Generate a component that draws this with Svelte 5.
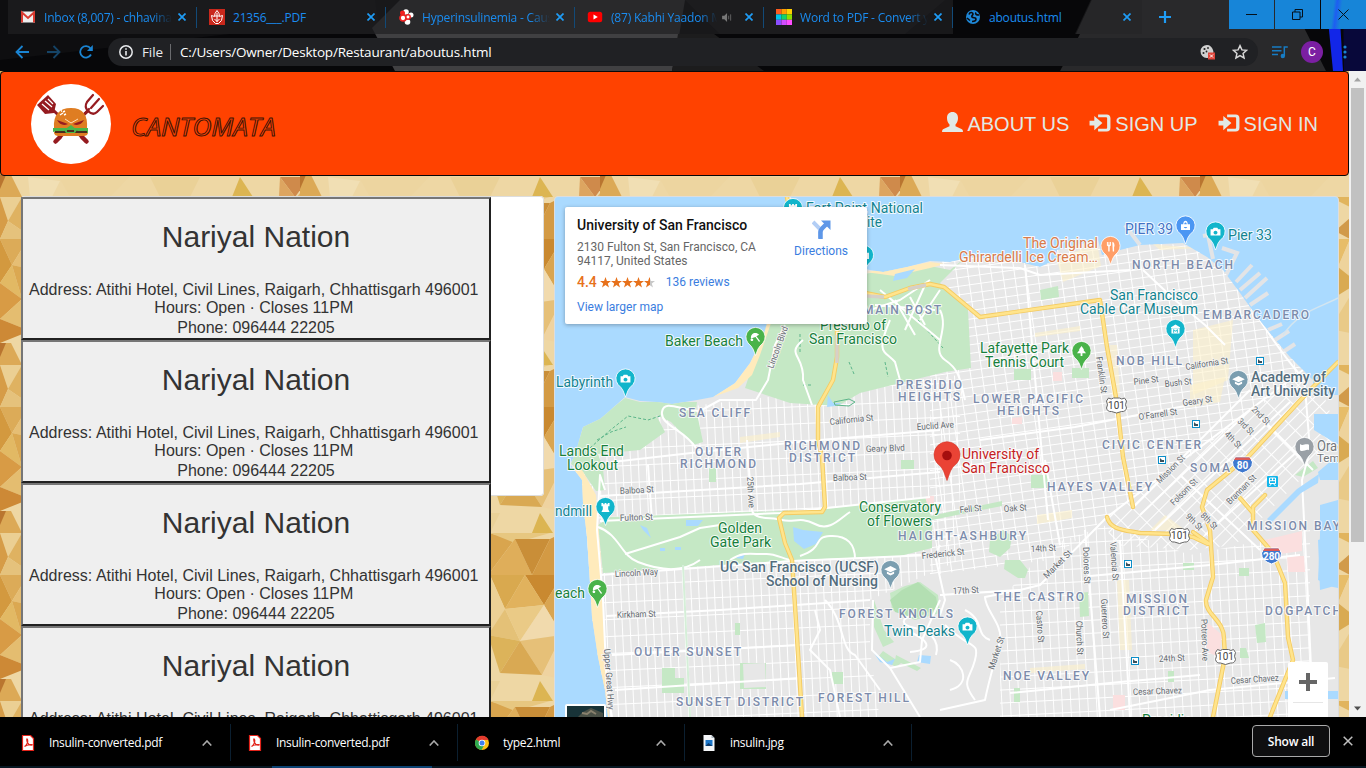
<script>
  const tabs = [
    { title: 'Inbox (8,007) - chhavina', icon: 'gmail', fade: true },
    { title: '21356___.PDF', icon: 'pdf' },
    { title: 'Hyperinsulinemia - Caus', icon: 'cells', fade: true },
    { title: '(87) Kabhi Yaadon Mein', icon: 'youtube', fade: true, audio: true },
    { title: 'Word to PDF - Convert y', icon: 'grid', fade: true },
    { title: 'aboutus.html', icon: 'globe', active: true }
  ];
  const downloads = [
    { name: 'Insulin-converted.pdf', icon: 'acro' },
    { name: 'Insulin-converted.pdf', icon: 'acro' },
    { name: 'type2.html', icon: 'chrome' },
    { name: 'insulin.jpg', icon: 'image' }
  ];
  const cards = [1, 2, 3, 4];
  const swatches = ['#ff5a1f', '#ff9d00', '#ffd000', '#00c4e8', '#13d36b', '#8ce000', '#8a4dff', '#d24dff', '#ff4dff'];

  // Map coordinates: [text, x, baseline, width]
  const areas = [
    ['SEA CLIFF', 679, 417, 71], ['OUTER', 695, 456, 46], ['RICHMOND', 680, 468, 76],
    ['RICHMOND', 784, 450, 76], ['DISTRICT', 789, 462, 66], ['PRESIDIO', 896, 389, 66],
    ['HEIGHTS', 898, 401, 62], ['LOWER PACIFIC', 973, 403, 110], ['HEIGHTS', 997, 415, 62],
    ['MAIN POST', 863, 314, 78], ['NORTH BEACH', 1132, 269, 101], ['EMBARCADERO', 1203, 319, 106],
    ['NOB HILL', 1116, 365, 66], ['CIVIC CENTER', 1102, 449, 99], ['SOMA', 1190, 472, 40],
    ['HAYES VALLEY', 1047, 491, 105], ['HAIGHT-ASHBURY', 898, 540, 128], ['MISSION BAY', 1247, 530, 93],
    ['THE CASTRO', 994, 601, 90], ['MISSION', 1126, 603, 61], ['DISTRICT', 1123, 615, 66],
    ['DOGPATCH', 1265, 615, 76], ['FOREST KNOLLS', 839, 618, 114], ['NOE VALLEY', 1003, 680, 86],
    ['OUTER SUNSET', 634, 656, 107], ['SUNSET DISTRICT', 676, 706, 127], ['FOREST HILL', 818, 702, 91]
  ];
  const places = [
    ['Baker Beach', 665, 346, 78, 'green'], ['Presidio of', 820, 330, 66, 'green'], ['San Francisco', 809, 344, 88, 'green'],
    ['Lands End', 559, 456, 65, 'green'], ['Lookout', 567, 470, 51, 'green'], ['Golden', 718, 533, 44, 'green'],
    ['Gate Park', 710, 547, 61, 'green'], ['Conservatory', 859, 512, 82, 'green'], ['of Flowers', 867, 526, 65, 'green'],
    ['Lafayette Park', 980, 353, 89, 'green'], ['Tennis Court', 985, 367, 79, 'green'], ['each', 555, 598, 30, 'green'],
    ['Presidio', 1142, 725, 50, 'green'],
    ['Labyrinth', 556, 387, 57, 'teal'], ['ndmill', 555, 516, 37, 'teal'], ['Fort Point National', 806, 213, 117, 'teal'],
    ['Site', 859, 227, 23, 'teal'], ['San Francisco', 1110, 300, 88, 'teal'], ['Cable Car Museum', 1080, 314, 118, 'teal'],
    ['Twin Peaks', 884, 636, 71, 'teal'], ['Pier 33', 1228, 240, 44, 'teal'], ['PIER 39', 1125, 234, 48, 'blue'],
    ['The Original', 1023, 248, 75, 'orange'], ['Ghirardelli Ice Cream…', 959, 262, 139, 'orange'],
    ['University of', 962, 459, 77, 'red'], ['San Francisco', 962, 473, 88, 'red'],
    ['Academy of', 1251, 382, 75, 'slate'], ['Art University', 1251, 396, 84, 'slate'],
    ['UC San Francisco (UCSF)', 720, 572, 159, 'slate'], ['School of Nursing', 766, 586, 112, 'slate'],
    ['Oracle', 1317, 451, 37, 'grey'], ['Temple', 1317, 462, 38, 'greysmall']
  ];
  // [text, x, baseline, width, rotation]
  const streets = [
    ['California St', 830, 425, 44, -6], ['Geary Blvd', 866, 452, 39, -2], ['Euclid Ave', 917, 430, 37, -4],
    ['Balboa St', 620, 494, 34, -3], ['Balboa St', 833, 481, 34, -2], ['Fulton St', 620, 521, 33, -2],
    ['Lincoln Way', 615, 577, 43, -3], ['Kirkham St', 617, 618, 39, -2], ['Frederick St', 922, 559, 43, -6],
    ['Fell St', 960, 513, 22, -6], ['Oak St', 1004, 512, 23, -4], ['14th St', 1031, 552, 25, -3], ['17th St', 953, 594, 26, -3],
    ['24th St', 1159, 662, 26, -3], ['Cesar Chavez', 1133, 695, 49, -2], ['Cesar Chavez', 1231, 684, 48, -4],
    ['Pine St', 1134, 385, 25, -7], ['Bush St', 1165, 387, 27, -6], ['California St', 1186, 370, 43, -9],
    ['Geary St', 1183, 406, 30, -8], ["O'Farrell St", 1139, 420, 39, -8],
    ['2nd St', 1251, 410, 22, 45], ['3rd St', 1237, 422, 19, 45], ['4th St', 1224, 435, 20, 45],
    ['9th St', 1185, 517, 20, 45], ['8th St', 1200, 516, 20, 45],
    ['Mission St', 1160, 484, 36, -45], ['Folsom St', 1174, 506, 34, -45], ['Brannan St', 1230, 505, 38, -45],
    ['Market St', 1047, 579, 36, -45], ['Market St', 994, 670, 34, -72], ['Lincoln Blvd', 773, 369, 44, -70],
    ['25th Ave', 747, 477, 31, 87], ['Franklin St', 1096, 357, 37, 82], ['Dolores St', 1083, 547, 37, 88],
    ['Valencia St', 1110, 542, 39, 86], ['Guerrero St', 1101, 599, 40, 87], ['Castro St', 1036, 611, 32, 86],
    ['Church St', 1076, 621, 34, 88], ['Potrero Ave', 1201, 619, 42, 88], ['Upper Great Hwy', 604, 649, 61, 86]
  ];
  const pins = [
    [793, 226, '#12b5cb', 'tower'], [864, 273, '#12b5cb', 'camera'],
    [755.5, 355, '#4ab34a', 'beach'], [625.5, 396.5, '#12b5cb', 'camera'], [605.5, 525, '#12b5cb', 'tower'],
    [597.5, 607, '#4ab34a', 'beach'], [890.5, 588, '#7b9eb0', 'cap'], [967.5, 644.5, '#12b5cb', 'camera'],
    [1175.5, 347, '#12b5cb', 'museum'], [1081.5, 369, '#4ab34a', 'tree'], [1110.5, 264, '#ff9e67', 'food'],
    [1185.5, 243.5, '#4b96f3', 'bag'], [1215.5, 249.5, '#12b5cb', 'camera'], [1238.5, 398, '#7b9eb0', 'cap'],
    [1304.5, 465, '#9aa0a6', 'flag']
  ];
  const glyphs = {
    camera: 'M-5.500-3h2.500l1-1.600h4l1 1.600h2.500v7h-11zM0-1.500a2.200 2.200 0 1 0 .01 0',
    tower: 'M-4.500-5h2v1.500h1.500V-5h2v1.500h1.500V-5h2v3.500h-1.500V2l1.500 3h-9L-3 2v-3.500h-1.500z',
    beach: 'M-5 1C-6-5 1-7 4-3L1-1.500 5 4l-1 1L0-.5zM-4 4a1.500 1.500 0 1 1 .01 0',
    cap: 'M0-5l7 3.500L0 2l-7-3.500zM-4 1v2.500L0 5.500 4 3.500V1L0 3z',
    museum: 'M0-5.500L5-2.500v1h-10v-1zM-4.500-1h9v5.500h-9zM-2.500 3.500h1V1L0 2.500 1.500 1v2.500h1v-4L0 1.500-2.500-.5z',
    tree: 'M0-6l3 4H2l3 4H1v3h-2v-3h-4l3-4h-1z',
    food: 'M-4-5v4l1.500 1v5.500h1.500V0L.500-1v-4h-1v3h-.7v-3h-1v3h-.7v-3zM2-5c2 0 2.500 2 2.500 5H4v5.500H2.500z',
    bag: 'M-5-2h2.500c0-5 5-5 5 0H5v6.500H-5zM-1.400-2h2.800c0-2.500-2.800-2.500-2.800 0zM-2 1c1 2 3 2 4 0',
    flag: 'M-5-4c3 3 6-1 10 1v6C2 1-2 6-5 3z'
  };
  const land = 'M608 717L605 690 598 657 592 617 590 583 587 537 583 503 582 480 570 464 575 455 583 427 600 419 606 414 625 397 640 401 657 402 672 404 697 400 713 397 735 383 750 363 763 337 767 323 780 260 787 197 791 197 800 235 840 262 870 270 883 272 907 267 930 261 950 262 973 257 1020 262 1040 267 1057 259 1057 250 1098 240 1102 255 1120 250 1140 245 1183 243 1207 257 1223 270 1240 293 1257 317 1273 337 1290 357 1303 370 1313 380 1313 395 1338 395 1338 414 1314 414 1314 430 1338 445 1338 455 1318 472 1320 480 1338 480 1338 500 1320 505 1320 535 1318 580 1333 587 1338 588 1338 691 1285 691 1285 699 1338 699 1338 717Z';
  const parks = [
    'M767 323L785 290 870 273 930 266 950 270 965 258 940 283 968 310 971 368 945 372 860 393 838 406 790 403 745 388 757 352Z',
    'M583 427L606 413 625 398 640 402 697 402 696 409 703 442 693 445 671 422 656 415 665 432 640 450 598 454 603 468 605 490 596 491 583 472 571 464Z',
    'M598 525L610 517 780 511 822 509 925 497 932 520 932 548 900 556 795 560 690 567 603 573Z',
    'M930 516L1002 501 1002 506 932 520Z', 'M740 663h26v26h-26z', 'M890 593L905 586 920 582 938 595 940 613 915 620 892 610Z',
    'M1005 560L1020 560 1028 570 1025 578 1018 578 1004 569Z', 'M990 540L1003 530 1012 536 1010 548 1000 557 989 552Z',
    'M1072 368h17v10h-17z', 'M1014 369h17v11h-17z', 'M1040 290l18-4 1 11-18 3z', 'M1031 475h17v13h-17z',
    'M1079 593l9-1 1 24-9 1z', 'M1255 625l10-2 1 19-9 1z', 'M1183 563h11v7h-11z', 'M1239 568h10v8h-10z',
    'M662 668h13v10h9v15h-22z', 'M874 600l10 30 10 12-11 5-9-20z', 'M1295 475l18-14 5 7-15 9z',
    'M735 623h5v12h-5z', 'M709 468h7v14h-7z', 'M1014 688h6v14h-6z', 'M1168 671h6v11h-6z', 'M832 672h11v12h-11z',
    'M896 655l25 13-4 3-22-11zM883 651l18 12-5 4-18-10z', 'M901 460h13v9h-13z', 'M1240 648h6l3 10h-9z'
  ];
  const white = [
    'M600 521L780 513 930 497M600 575L792 561 930 555', 'M605 490L600 475 597 530 603 600 607 690 612 717',
    'M598 527C620 535 620 555 638 562S680 575 700 560', 'M625 554L680 537 700 528 720 525M752 511C756 520 770 517 782 520S800 516 815 524S840 518 850 512',
    'M730 560C745 550 755 555 765 554S785 560 792 560M800 556C825 548 812 537 830 536S855 545 855 559',
    'M696 448C685 430 660 425 662 412S680 410 700 411L720 400 756 400 768 380 775 345 785 325',
    'M803 340C785 355 805 355 803 380L812 405M890 320C875 355 885 350 895 362L900 380',
    'M600 496L800 484 940 472M612 462L700 452 820 440 940 430', 'M606 616L720 610 870 600', 'M612 655L800 645M615 690L800 678',
    'M683 565L690 717M648 465L652 520M747 440L752 511', 'M980 440L1075 427 1190 405', 'M940 265L1020 268 1040 275 1130 270',
    'M1143 270L1175 300 1205 325 1225 345', 'M1220 265C1245 290 1258 325 1300 375', 'M1025 265L1037 400 1048 520',
    'M1107 517L1040 585 1020 590 985 597C985 610 1003 625 1000 640S990 675 985 700L940 710',
    'M1107 517L1303 370', 'M1133 507L1180 460 1250 390', 'M940 595L1020 590M940 545L935 555 945 600 940 615',
    'M1045 460L1060 545M1085 530L1100 717M1120 540L1130 717', 'M1010 693L1120 682 1200 675M1110 710L1210 690 1335 678',
    'M1304 375L1310 450 1302 480 1308 600 1312 690', 'M1090 576L1210 565 1300 555', 'M873 600L872 650 890 668 920 717',
    'M890 668L920 662 922 640 940 600', 'M915 615C900 618 900 625 915 628S940 640 936 655M905 630C930 640 935 650 910 652',
    'M945 625C970 650 980 640 975 660S960 680 975 700M950 660C965 665 970 685 950 690M965 610C985 620 975 635 990 640',
    'M815 610L820 630 810 650 830 670 840 717M825 600C845 620 840 650 855 655L880 690', 'M1180 475L1260 550M1140 515L1250 410M1155 530L1290 402',
    'M1205 535L1310 440', 'M1253 410L1313 470', 'M940 310C950 330 930 350 945 360S960 380 965 400', 'M930 280L900 300 870 310 850 330M880 290L940 340',
    'M875 305L935 310M895 300L915 335M910 297L925 325M925 285L905 330M940 290L920 320'
  ];
  const yellow = [
    'M787 197L792 225 815 260 837 323 837 357 833 380 818 407 818 440 822 457 825 507 822 512 784 513 779 518 785 543 792 560 797 637 802 717',
    'M850 290L885 297 910 288 930 284 944 287 980 317 1100 300 1107 347 1117 403 1123 457 1133 507',
    'M1107 517C1110 530 1125 530 1140 533L1175 534 1193 537 1208 544',
    'M1338 362L1307 393 1247 458 1240 463 1207 490 1202 507 1210 530 1213 577 1206 600C1205 615 1225 620 1224 640L1225 657 1213 717',
    'M1265 495L1253 507 1253 530 1273 553 1285 583 1288 637 1293 660 1270 717', 'M1240 498L1253 513', 'M1193 532L1211 545'
  ];
  const cream = ['M1057 260l40-18 4 24-38 16z', 'M1130 225l30 20 40 3-40 2z', 'M1193 330l40-10-5 60-35 15z', 'M1117 580h12l3 70h-12z', 'M1037 515l35-5v8l-35 6z', 'M1150 530l15-15 20 15z', 'M740 437l40-5v5l-40 6z', 'M1035 333l45-7v5l-45 6z', 'M1190 385l35-8-5 25-30 5z', 'M1110 345h7l3 50h-8z', 'M1030 668l55-4v5l-55 4z'];
  const pink = ['M615 432l26-5 1 20-27 2z', 'M1265 540l37-9v20l-30 4z', 'M1287 556h17l1 16h-17z', 'M1205 620l17 15-3 22-12-5z', 'M1113 695h12v15h-12z', 'M1053 372h9v9h-9zM1012 418l10-1v7h-10z', 'M926 496h8v10h-8z'];
  const transit = [[1260, 361], [1196, 424], [1162, 460], [1128, 564], [1135, 661]];
  const shields = [[1116.5, 405], [1179.5, 535.5], [1225.5, 656.5]];
  const interstates = [[1242.5, 465, '80'], [1271.5, 556, '280']];
  const piers = 'M1203 236l5-1 5 24M1222 248l15 5-11 22M1236 282l16-17M1240 290l20-17M1245 298l22-20M1250 305l18-12M1268 330l14-6M1275 340l14-9M1125 225l15 20M1283 352l12-8';

  // Wallpaper facets inside one 300x168 tile
  const facets = [
    ['0,0 28,0 12,26', '#dcab58'], ['28,0 70,0 40,32', '#efcf8f'], ['12,26 28,0 40,32', '#e6be74'], ['0,0 12,26 0,44', '#d3993f'],
    ['0,44 12,26 22,60', '#e2b964'], ['12,26 40,32 22,60', '#dba851'], ['0,44 22,60 0,80', '#d89b45'], ['0,80 22,60 30,92', '#e4bd70'],
    ['0,80 30,92 0,104', '#cd8936'], ['0,104 11,104 22,126 0,126', '#dca956'], ['0,118 6,104 0,104', '#b9752f'], ['0,126 22,126 8,150', '#ebcf93'],
    ['0,126 8,150 0,168', '#d69c47'], ['8,150 22,126 34,168', '#dfb261'], ['0,168 8,150 34,168', '#e5c27c'],
    ['125,0 150,0 138,28', '#e7bd69'], ['138,28 150,0 158,44', '#eed39c'], ['132,60 138,28 158,44', '#d9aa52'], ['130,90 158,44 160,96', '#e9ca88'],
    ['130,126 160,126 158,140', '#e1b45d'], ['135,160 158,140 150,168', '#d19a4a'],
    ['190,0 225,0 205,34', '#d9a94f'], ['225,0 262,0 244,30', '#c98930'], ['205,34 225,0 244,30', '#e1b25d'], ['190,0 205,34 188,60', '#ecd095'],
    ['188,60 205,34 220,66', '#e4c177'], ['205,34 244,30 220,66', '#eaca86'], ['244,30 262,0 262,60', '#d9a551'], ['220,66 244,30 262,60', '#f1daad'],
    ['188,60 220,66 200,98', '#dcb35a'], ['220,66 262,60 242,100', '#e6c078'], ['200,98 220,66 242,100', '#d9a953'], ['242,100 262,60 262,104', '#efd3a0'],
    ['188,126 215,132 188,168', '#d9a54e'], ['190,126 250,126 215,136', '#e7c780'],
    ['188,168 215,132 232,168', '#dfae5a'], ['215,132 250,132 232,168', '#c98e38'], ['250,132 262,126 262,168 232,168', '#d39a44'],
    ['240,106 253,126 232,126', '#dcb552'], ['280,106 310,106 295,126', '#cf8a4b'], ['280,106 295,126 279,126', '#dda560'], ['313,105 328,126 297,126', '#dfb069'],
    ['28,106 60,110 52,126 30,126', '#f1dfb4'], ['60,108 130,105 110,126 70,126', '#edd5a0'], ['150,106 200,106 190,126 160,126', '#ead197']
  ];
</script>

{#snippet favicon(kind)}
  <svg class="fav" viewBox="0 0 16 16">
    {#if kind === 'gmail'}
      <rect x="1" y="2.500" width="14" height="11" fill="#eee" /><path d="M2 13.500V3.500L8 9l6-5.500v10" fill="none" stroke="#d93a30" stroke-width="2" />
    {:else if kind === 'pdf'}
      <rect width="16" height="16" fill="#c9281c" /><path d="M8 1.500l2 3 .5 3 3-1-1 5-3 3h-3l-3-3-1-5 3 1 .500-3z" fill="none" stroke="#fff" /><path d="M8 4v9M5.500 10L8 12.500 10.500 10M6 7h4" stroke="#fff" fill="none" />
    {:else if kind === 'cells'}
      <circle cx="8" cy="3" r="2.800" fill="#fff" /><circle cx="4.500" cy="4" r="2.500" fill="#e22" /><circle cx="13" cy="6" r="2.500" fill="#fff" /><circle cx="9.500" cy="13" r="2.800" fill="#fff" /><circle cx="5" cy="9" r="3" fill="#fff" stroke="#e22" stroke-width="1.700" /><circle cx="10" cy="8" r="2.200" fill="#fff" stroke="#e22" stroke-width="1.500" />
    {:else if kind === 'youtube'}
      <rect x=".8" y="2.800" width="14.400" height="10.500" rx="2.500" fill="#f00" /><path d="M6.500 5.500v5L10.800 8z" fill="#fff" />
    {:else if kind === 'grid'}
      {#each swatches as c, i}<rect x={(i % 3) * 5.4} y={Math.floor(i / 3) * 5.4} width="5.400" height="5.400" fill={c} />{/each}
    {:else if kind === 'globe'}
      <circle cx="8" cy="8" r="7" fill="#1e88d8" /><path d="M4 5.500c1-3 4-2 4-.5S6 6.500 7 8s4 0 4 2-2 2.500-4 2.500M11 3.500c-1 1.500 0 2.500 3 2.500M2 9l3 2.500" fill="none" stroke="#0a0a0f" stroke-width="1.600" />
    {:else if kind === 'acro'}
      <path d="M2.500.5h8l3 3v12h-11z" fill="#fff" stroke="#e2231a" stroke-width="1.200" /><path d="M4.500 11.500c2-1 4-5 3-7s-1 1 0 3 3 3 4.500 2.500-4-1-7.500 1.500z" fill="none" stroke="#e2231a" stroke-width="1.200" />
    {:else if kind === 'chrome'}
      <circle cx="8" cy="8" r="7" fill="#fbc116" /><path d="M8 8L2 4.400A7 7 0 0 1 14.500 5H8z" fill="#e33b2e" /><path d="M2 4.400A7 7 0 0 0 7.500 15L10.500 9.500 8 8z" fill="#2da94f" /><circle cx="8" cy="8" r="3.300" fill="#fff" /><circle cx="8" cy="8" r="2.500" fill="#3e82f1" />
    {:else}
      <path d="M2.500 0h8l3 3v13h-11z" fill="#f4f6f8" /><path d="M10.500 0v3h3z" fill="#a9b4bd" /><rect x="4.500" y="5" width="7" height="6" fill="#1b76c8" /><path d="M4.500 11l3-3 4 3z" fill="#0c3868" />
    {/if}
  </svg>
{/snippet}

{#snippet signArrow()}
  <svg class="glyph" viewBox="0 0 22 20"><path d="M0 7h5V2l8.500 7.500L5 17v-5H0z" /><path d="M9 .500h9a4 4 0 0 1 4 4v10a4 4 0 0 1-4 4H9v-3h8.500q1 0 1-1v-10q0-1-1-1H9z" /></svg>
{/snippet}

<div class="window">
  <header class="chrome">
    <svg class="theme" viewBox="0 0 1366 71" preserveAspectRatio="none">
      <rect width="1366" height="71" fill="#070709" />
      <path d="M0 60L230 34 380 34 375 0H0z" fill="#0e0e10" />
      <path d="M372 28L400 0H685L678 42 672 71H395z" fill="#404042" />
      <path d="M685 0h260l-40 34H720z" fill="#161617" /><path d="M678 34h36l50 37h-92z" fill="#1c1c1d" />
      <path d="M1100 0h190l36 71H1060l20-37z" fill="#29292b" />
      <path d="M1328 20h12l3 51h-10z" fill="#1226e8" /><path d="M1343 0h23v71h-22z" fill="#08083a" />
    </svg>
    <div class="tabstrip">
      {#each tabs as t}
        <div class="tab" class:active={t.active}>
          {@render favicon(t.icon)}
          <span class="title" class:fade={t.fade} class:short={t.audio}>{t.title}</span>
          {#if t.audio}<svg class="audio" viewBox="0 0 12 10"><path d="M0 3h2.500L5.500 0v10L2.500 7H0z" fill="#777" /><path d="M7.300 3v4M9.500 1.500v7" stroke="#666" /></svg>{/if}
          <svg class="x" viewBox="0 0 8 8"><path d="M.5.5l7 7M7.500.5l-7 7" /></svg>
        </div>
      {/each}
      <svg class="plus" viewBox="0 0 12 12"><path d="M6 0v12M0 6h12" /></svg>
      <div class="controls">
        <span><svg viewBox="0 0 11 11"><path d="M0 5.500h11" /></svg></span>
        <span><svg viewBox="0 0 11 11"><path d="M.5 3h7.500v7.500H.5zM3 3V.5h7.500V8H8" /></svg></span>
        <span><svg viewBox="0 0 11 11"><path d="M.5.5l10 10M10.500.5l-10 10" /></svg></span>
      </div>
    </div>
    <div class="toolbar">
      <svg class="nav" viewBox="0 0 14 14"><path d="M14 7H1.500M7.500 1L1.500 7l6 6" /></svg>
      <svg class="nav dim" viewBox="0 0 14 14"><path d="M0 7h12.500M6.500 1l6 6-6 6" /></svg>
      <svg class="nav" viewBox="0 0 14 14"><path d="M12 9.500A5.700 5.700 0 1 1 11.500 3.500" /><path d="M13.800 0v6H8z" class="solid" /></svg>
      <div class="omnibox">
        <svg class="info" viewBox="0 0 14 14"><circle cx="7" cy="7" r="6.200" fill="none" stroke="#e8eaed" stroke-width="1.500" /><path d="M7 6v4.500M7 3.300v1.500" stroke="#e8eaed" stroke-width="1.600" /></svg>
        <span class="file">File</span><i></i><span class="url">C:/Users/Owner/Desktop/Restaurant/aboutus.html</span>
        <svg class="cookie" viewBox="0 0 16 16"><path d="M7 1a6.500 6.500 0 1 0 6.500 7L13 6c-1-3-3-5-6-5z" fill="#d0d0d0" /><circle cx="4.500" cy="5" r="1.100" fill="#222" /><circle cx="3.500" cy="9" r="1" fill="#222" /><circle cx="8" cy="4" r=".9" fill="#222" /><circle cx="6.500" cy="7.500" r=".9" fill="#222" /><rect x="8" y="8.500" width="7" height="7" fill="#e0453a" /><path d="M10 10.500l3 3M13 10.500l-3 3" stroke="#fff" /></svg>
        <svg class="star" viewBox="0 0 24 24"><path d="M12 2.500l2.900 6.300 6.900.7-5.200 4.600 1.500 6.800-6.100-3.500-6.100 3.500 1.500-6.800L2.200 9.500l6.900-.7z" fill="none" stroke="#d8d8d8" stroke-width="2.200" /></svg>
      </div>
      <svg class="music" viewBox="0 0 16 13"><path d="M0 1h9.500M0 4.800h9.500M0 8.600h6M12.300 10V1h3.500" fill="none" stroke="#177cc4" stroke-width="1.500" /><circle cx="10.800" cy="10" r="2.200" fill="#177cc4" /></svg>
      <span class="avatar">C</span>
      <svg class="dots" viewBox="0 0 4 14"><circle cx="2" cy="2" r="1.600" /><circle cx="2" cy="7" r="1.600" /><circle cx="2" cy="12" r="1.600" /></svg>
    </div>
  </header>

  <div class="viewport">
    <main class="page">
      <svg class="wallpaper">
        <defs>
          <pattern id="wood" width="300" height="168" patternUnits="userSpaceOnUse">
            <rect width="300" height="168" fill="#eed7a4" />
            {#each facets as f}<polygon points={f[0]} fill={f[1]} />{/each}
          </pattern>
        </defs>
        <rect width="100%" height="100%" fill="url(#wood)" />
      </svg>
      <nav class="navbar">
        <svg class="logo" viewBox="0 0 80 80">
          <circle cx="40" cy="40" r="40" fill="#fff" />
          <path d="M22 26l34 32M58 26L24 58" stroke="#951b20" stroke-width="3" /><path d="M51 53l4.500 4.500M29 53l-4.500 4.500" stroke="#951b20" stroke-width="4.500" stroke-linecap="round" />
          <path d="M6 21L17 11l8 9-2 9-9 1z" fill="#951b20" /><path d="M11 20l7 6M14 17l7 6M17 15l5 5" stroke="#fff" stroke-width="1.300" />
          <path d="M62 11l-6 7q-3 5 1 9 5 5 9 1l6-6M68 15l-8 9M52 31l6-6" fill="none" stroke="#951b20" stroke-width="2.200" stroke-linecap="round" />
          <path d="M23 44c-1-13 5-20 17-20s17 7 16 20z" fill="#df7d22" /><path d="M23 48h34c0 3-2 4-5 4H28c-3 0-5-1-5-4z" fill="#df7d22" />
          <path d="M22 44h35v5c-3-1-3 1-6-1-3 3-5-1-7 1h-8c-3-2-5 1-7-1-3 2-4-1-7 0z" fill="#49b64a" /><path d="M24 47h9l3-1h8l3 1h9v2H24z" fill="#4b2b1c" /><path d="M33 46l7-5 6 5-2 3h-9z" fill="#49b64a" /><path d="M36 48v-2h7v2z" fill="#4b2b1c" />
          <path d="M26 36l11 4q-7 3-11-4zM53 36l-11 4q7 3 11-4z" fill="#951b20" /><path d="M34 35l6 4 7-4" stroke="#ffe0ba" fill="none" /><path d="M29 31l3-2M32 28l2-1M33 31l2-1M30 27h1" stroke="#fff" stroke-width="1.400" />
        </svg>
        <span class="brand">CANTOMATA</span>
        <div class="links">
          <span><svg class="glyph user" viewBox="0 0 21 20"><path d="M10.500 0c3.500 0 5.500 2.500 5.500 6 0 3-1 5-2.500 6.500v1.700l6.500 3q1 .8 1 2.800H0q0-2 1-2.800l6.500-3v-1.700C6 11 5 9 5 6c0-3.500 2-6 5.500-6z" /></svg>ABOUT US</span>
          <span>{@render signArrow()}SIGN UP</span>
          <span>{@render signArrow()}SIGN IN</span>
        </div>
      </nav>

      <div class="columns">
        <section class="list">
          {#each cards as _}
            <button class="card">
              <strong>Nariyal Nation</strong>
              <span class="address">Address: Atithi Hotel, Civil Lines, Raigarh, Chhattisgarh 496001&nbsp;</span>
              <span class="hours">Hours: Open · Closes 11PM&nbsp;</span>
              <span>Phone: 096444 22205</span>
            </button>
          {/each}
        </section>

        <section class="map">
          <svg class="canvas" viewBox="555 197 783 520">
            <defs>
              <clipPath id="land"><path d={land} /></clipPath>
              <pattern id="west" width="7.800" height="17" patternUnits="userSpaceOnUse" patternTransform="rotate(-2.600)"><path d="M0 0H7.800M0 0V17" stroke="#fff" stroke-width="2" /></pattern>
              <pattern id="north" width="11.500" height="8.500" patternUnits="userSpaceOnUse" patternTransform="rotate(-8)"><path d="M0 0H11.500M0 0V8.500" stroke="#fff" stroke-width="2" /></pattern>
              <pattern id="soma" width="10" height="17" patternUnits="userSpaceOnUse" patternTransform="rotate(45)"><path d="M0 0H10M0 0V17" stroke="#fff" stroke-width="2" /></pattern>
              <pattern id="south" width="8.600" height="13" patternUnits="userSpaceOnUse" patternTransform="rotate(-3)"><path d="M0 0H8.600M0 0V13" stroke="#fff" stroke-width="1.800" /></pattern>
            </defs>
            <rect x="555" y="197" width="783" height="520" fill="#aadaff" />
            <path d={piers} fill="none" stroke="#e3e4e6" stroke-width="4" />
            <path d="M1283 335C1300 310 1320 308 1338 298" fill="none" stroke="#d3e5f0" stroke-width="1.500" />
            <path d={land} fill="#e7e7e7" />
            <g clip-path="url(#land)">
              <path d="M560 440L700 405 960 375V560L870 600V650L880 720H600z" fill="url(#west)" />
              <path d="M940 255L1130 240 1330 260 1310 370 1107 517 1050 560 930 575V370L970 365z" fill="url(#north)" />
              <path d="M1107 517L1313 365 1340 440 1235 545 1190 550 1110 545z" fill="url(#soma)" />
              <path d="M1050 545L1107 525 1190 555 1240 545 1310 530 1310 720H1000V600z" fill="url(#south)" />
              {#each cream as d}<path {d} fill="#fdf1cc" opacity=".6" />{/each}
              {#each pink as d}<path {d} fill="#fbdfdf" />{/each}
              {#each parks as d}<path {d} fill="#c5e8c5" />{/each}
              <path d="M743 664l22-1 1 24-22 1z" fill="#e7e7e7" />
              <path d="M890 600L902 590 918 582 936 597 938 608 915 618 895 612z" fill="#b3dfb2" />
              <path d="M582 470L596 495 601 560 604 620 609 717H550V470z" fill="#ffebbc" />
              <path d="M713 397L735 383 750 363 763 337 767 323H771L760 355 752 375 738 388z" fill="#ffebbc" />
              <path d="M865 272L905 267 930 262 945 264 930 268 895 276z" fill="#ffebbc" />
              <path d="M686 520h17l-5 6h-12zM793 527l10 3 20 2-7 12-12 5-10-8zM640 525l7 3 4 10-8-8zM660 548h5v3h-5zM675 547h6v3h-6zM895 274l20-5-8 9-14 3zM828 395l5 8 9 0-7 3-8 1zM872 650l15 12 8-3-3 6-12-3zM919 655l12 1-1 8-13-2zM735 558l10-4-2 5z" fill="#aadaff" />
              <path d="M800 334v18M849 362l5 12M803 385h8M885 362l3 15M918 320l25 28M597 440l14-8 15-5M590 448l18-16 20-16 20 4 15-5" fill="none" stroke="#5cb58a" stroke-dasharray="3 2" />
              <path d="M834 402l15-3 6 3-6 4-14-1z" fill="none" stroke="#5cb58a" />
              {#each white as d}<path {d} fill="none" stroke="#fff" stroke-width="2" stroke-linejoin="round" />{/each}
              <path d="M683 565L690 717" stroke="#d5efd8" stroke-width="2" />
            </g>
            <path d="M1319 474l-22 15-30 30 4 4 30-30 17-10zM1318 540l20-5v50l-18 5z" fill="#aadaff" />
            {#each yellow as d}<path {d} class="road edge" />{/each}
            {#each yellow as d}<path {d} class="road" />{/each}
            <path d="M837 335v28M867 296l17 1M908 289l18-4" stroke="#d6d0c8" stroke-width="3.500" />

            {#each streets as s}
              <text class="street" x={s[1]} y={s[2]} textLength={s[3]} lengthAdjust="spacingAndGlyphs" transform="rotate({s[4]} {s[1]} {s[2]})">{s[0]}</text>
            {/each}
            {#each areas as a}<text class="area" x={a[1]} y={a[2]} textLength={a[3]}>{a[0]}</text>{/each}
            {#each transit as t}
              <g transform="translate({t[0]} {t[1]})"><rect x="-3.500" y="-3.500" width="7" height="7" fill="#fff" stroke="#0b8ec9" /><path d="M-2-2l2 2h2v2h-4z" fill="#38505c" /></g>
            {/each}
            <g transform="translate(1272.500 481.500)"><rect x="-5.500" y="-5.500" width="11" height="11" rx="1" fill="#12b5ea" /><path d="M-3-3.500h6v5.500h-6zM-3-.800h6M0-3.500v3M-3 4.500l2-2.300M3 4.500L1 2.200" stroke="#fff" fill="none" /></g>
            {#each shields as s}
              <g transform="translate({s[0]} {s[1]})"><path d="M-8-7Q-5-5-3-7H3Q5-5 8-7L10-4Q8 0 10 3 9 7 5 6.500L0 8-5 6.500Q-9 7-10 3-8 0-10-4z" fill="#fff" stroke="#666" /><text class="shield" y="3.500">101</text></g>
            {/each}
            {#each interstates as s}
              <g transform="translate({s[0]} {s[1]})"><path d="M-7-8h14l3 5Q10 5 0 8-10 5-10-3z" fill="#3f79cf" stroke="#fff" /><path d="M-7-7.500h14l1.500 2.500h-17z" fill="#dc5b57" /><text class="shield inter" y="3.500">{s[2]}</text></g>
            {/each}
            {#each places as p}<text class="place {p[4]}" x={p[1]} y={p[2]} textLength={p[3]} lengthAdjust="spacingAndGlyphs">{p[0]}</text>{/each}
            {#each pins as p}
              <g transform="translate({p[0]} {p[1]})">
                <path d="M0 .5L-2.500-6Q-4-9-7.500-12A9.600 9.600 0 1 1 7.500-12Q4-9 2.500-6z" fill={p[2]} stroke="#fff" stroke-width=".8" />
                <path d={glyphs[p[3]]} transform="translate(0 -17.500) scale(.9)" fill="#fff" fill-rule="evenodd" />
              </g>
            {/each}
            <g transform="translate(947 480.500)"><path d="M0 0L-3.500-9.500Q-5-13.500-10-17.500A13 13 0 1 1 10-17.500Q5-13.500 3.500-9.500z" fill="#ea4335" stroke="#d33426" stroke-width=".6" /><circle cy="-25" r="4.800" fill="#a50e0e" /></g>
          </svg>

          <div class="place-card">
            <div class="details">
              <h2>University of San Francisco</h2>
              <p>2130 Fulton St, San Francisco, CA<br />94117, United States</p>
              <div class="rating">
                <b>4.4</b>
                <svg class="stars" viewBox="0 0 55 11">
                  <defs><linearGradient id="half"><stop offset=".5" stop-color="#e7711b" /><stop offset=".5" stop-color="#c8c8c8" /></linearGradient></defs>
                  {#each [0, 1, 2, 3, 4] as i}<path transform="translate({i * 11} 0)" d="M5.500 0l1.400 3.900 4.100.1-3.200 2.500 1.200 4-3.500-2.400-3.500 2.400 1.200-4L0 4l4.100-.1z" fill={i === 4 ? 'url(#half)' : '#e7711b'} />{/each}
                </svg>
                <a href="#reviews">136 reviews</a>
              </div>
              <a href="#map">View larger map</a>
            </div>
            <div class="directions">
              <svg viewBox="0 0 19 19"><path d="M1 2l7 7v9" fill="none" stroke="#b3cef5" stroke-width="4" /><path d="M8.500 19v-7q0-2 2-4l5-5" fill="none" stroke="#5e97e8" stroke-width="4.500" /><path d="M9 .5h9.500V10z" fill="#5e97e8" /></svg>
              <a href="#directions">Directions</a>
            </div>
          </div>
          <div class="zoom"><svg viewBox="0 0 18 18"><path d="M9 0v18M0 9h18" stroke="#666" stroke-width="4" /></svg><i></i></div>
          <svg class="satellite" viewBox="0 0 41 14"><path d="M0 2q0-2 2-2h37q2 0 2 2v12H0z" fill="#fff" /><path d="M2 2h37v12H2z" fill="#183338" /><path d="M12 14l6-6 8-4 12 5v5z" fill="#4b5147" /><path d="M17 9l5 1 4-3 5 3" stroke="#89816d" stroke-width="2" fill="none" /></svg>
        </section>
      </div>
    </main>
    <div class="scrollbar"><svg viewBox="0 0 17 17"><path d="M5 10.500L8.500 6.500 12 10.500z" fill="#a3a3a3" /></svg><div class="thumb"></div><svg viewBox="0 0 17 17"><path d="M5 6.500L8.500 10.500 12 6.500z" fill="#505050" /></svg></div>
  </div>

  <footer class="shelf">
    {#each downloads as d}
      <div class="item">{@render favicon(d.icon)}<span>{d.name}</span><svg class="chev" viewBox="0 0 10 6"><path d="M.7 5.500L5 1l4.300 4.500" /></svg></div>
    {/each}
    <button class="showall">Show all</button>
    <svg class="close" viewBox="0 0 10 10"><path d="M.7.7l8.600 8.600M9.300.7L.7 9.300" /></svg>
    <div class="taskline"><i></i></div>
  </footer>
</div>

<style>
  :global(body) { margin: 0; overflow: hidden; }
  * { box-sizing: border-box; }
  .window { width: 1366px; height: 768px; display: flex; flex-direction: column; overflow: hidden; font-family: "Open Sans", sans-serif; }
  svg { flex: none; display: block; }
  a { color: #3a7de0; text-decoration: none; }

  .chrome { position: relative; height: 71px; flex: none; background: #070709; }
  .theme { position: absolute; inset: 0; width: 1366px; height: 71px; }
  .tabstrip { position: relative; display: flex; height: 34px; padding-left: 8px; }
  .tab { width: 189px; height: 34px; display: flex; align-items: center; padding: 0 10px 0 12px; background: rgba(32, 32, 34, .7); border-right: 1px solid #124a78; border-image: linear-gradient(transparent 8px, #124a78 8px, #124a78 27px, transparent 27px) 1; }
  .tab.active { background: linear-gradient(115deg, #070709 0 67%, #262628 68%); border: 0; padding-right: 11px; }
  .fav { width: 16px; height: 16px; }
  .title { width: 128px; margin-left: 8px; font-size: 12px; letter-spacing: -.2px; color: #1a8cf0; white-space: nowrap; overflow: hidden; }
  .title.fade { -webkit-mask-image: linear-gradient(90deg, #000 84%, transparent 100%); mask-image: linear-gradient(90deg, #000 84%, transparent 100%); }
  .title.short { width: 106px; }
  .audio { width: 11px; height: 9px; margin: 0 0 0 5px; }
  .x { width: 8px; height: 8px; margin-left: auto; }
  .x path, .plus path { fill: none; stroke: #1f9cf5; stroke-width: 1.7; }
  .plus { width: 12px; height: 12px; margin: 11px 0 0 17px; }
  .plus path { stroke-width: 2.2; }
  .controls { display: flex; gap: 1px; margin-left: auto; height: 29px; }
  .controls span { width: 45px; display: grid; place-items: center; background: #1785d8; }
  .controls span:last-child { background: linear-gradient(97deg, #1785d8 27%, #1e5df2 34%, #1785d8 45%); }
  .controls svg { width: 11px; height: 11px; }
  .controls path { fill: none; stroke: #05101a; stroke-width: 1; }
  .toolbar { position: relative; display: flex; align-items: center; height: 36px; padding: 0 19px 0 15px; }
  .nav { width: 14px; height: 14px; margin-right: 18px; fill: none; stroke: #1a84d2; stroke-width: 1.8; }
  .nav.dim { stroke: #154467; }
  .solid { fill: #1a84d2; stroke: none; }
  .omnibox { width: 1150px; height: 28px; margin-left: -3px; border-radius: 14px; background: #202124; display: flex; align-items: center; padding: 0 10px 0 11px; color: #e8eaed; font-size: 13.5px; letter-spacing: -.1px; }
  .info { width: 14px; height: 14px; }
  .file { margin-left: 9px; }
  .url { letter-spacing: -.19px; color: #fff; }
  .omnibox i { width: 1px; height: 16px; background: #6a6b6e; margin: 0 9px 0 7px; }
  .cookie { width: 16px; height: 16px; margin-left: auto; }
  .star { width: 16px; height: 16px; margin-left: 16px; }
  .music { width: 16px; height: 13px; margin-left: 14px; }
  .avatar { width: 22px; height: 22px; margin-left: 13px; border-radius: 50%; background: #7b1fa2; color: #fff; font: 12px/22px Roboto, sans-serif; text-align: center; }
  .dots { width: 4px; height: 14px; margin-left: auto; fill: #1a84d2; }

  .viewport { flex: none; height: 646px; display: flex; overflow: hidden; background: #fff; }
  .page { position: relative; width: 1349px; height: 646px; overflow: hidden; font-family: "Liberation Sans", Arial, sans-serif; }
  .wallpaper { position: absolute; inset: 0; width: 1349px; height: 646px; }
  .navbar { position: relative; height: 105px; border: 1px solid #080808; border-radius: 4px; background: #ff4200; display: flex; align-items: center; padding: 0 30px; }
  .logo { width: 80px; height: 80px; }
  .brand { margin: 4px 0 0 20px; font: italic 400 26px/30px "Open Sans", sans-serif; letter-spacing: .1px; color: #ff4200; -webkit-text-stroke: .9px #3a1408; text-shadow: .6px 0 0 #5b1a08; }
  .links { margin-left: auto; display: flex; gap: 20px; color: #e1e9e6; font-size: 20px; line-height: 24px; }
  .links span { display: flex; align-items: center; }
  .glyph { width: 22px; height: 19px; margin: -1px 4px 0 0; fill: #e1e9e6; }
  .glyph.user { width: 21px; height: 20px; margin: -3px 4px 0 0; }

  .columns { position: relative; display: flex; align-items: flex-start; gap: 10px; padding: 20px 10px 0 21px; }
  .list { width: 523px; height: 300px; padding-top: 1px; background: #fff; border-radius: 4px; box-shadow: inset 0 0 0 1px #ddd; display: flex; flex-direction: column; align-items: flex-start; flex: none; }
  .card { width: 470px; height: 143px; flex: none; display: flex; flex-direction: column; align-items: center; padding: 21px 0 0; background: #efefef; border: 2px solid; border-color: #767676 #212121 #212121 #767676; border-radius: 0; color: #333; font: 16px/18px "Liberation Sans", Arial, sans-serif; white-space: nowrap; }
  .card strong { font-size: 30px; line-height: 33px; font-weight: 400; margin-bottom: 28px; }
  .card .address { letter-spacing: .02px; }
  .card .hours { margin-bottom: 2px; }
  .map { position: relative; width: 785px; height: 600px; flex: none; border: 1px solid #ddd; border-radius: 4px; overflow: hidden; background: #e6e7e8; font-family: Roboto, sans-serif; }
  .canvas { width: 783px; height: 520px; }
  .canvas text { paint-order: stroke; stroke: #fff; stroke-width: 2px; stroke-linejoin: round; font-family: Roboto, sans-serif; }
  .canvas .area { font-size: 12px; font-weight: 500; fill: #7c8bab; stroke-opacity: .8; }
  .canvas .street { font-size: 9px; fill: #62686e; stroke-width: 1.8px; stroke: #f4f4f4; }
  .canvas .place { font-size: 14px; stroke-opacity: .85; }
  .green { fill: #17803d; } .teal { fill: #128390; } .blue { fill: #4272c4; } .orange { fill: #d97a4a; } .red { fill: #c5221f; }
  .canvas .slate { fill: #546e7e; font-weight: 500; } .grey { fill: #72777c; } .canvas .greysmall { fill: #72777c; font-size: 11px; }
  .canvas .shield { font-size: 10px; text-anchor: middle; fill: #444; stroke: none; }
  .canvas .inter { fill: #fff; font-weight: 700; }
  .road { fill: none; stroke: #ffe48c; stroke-width: 2.6; stroke-linejoin: round; stroke-linecap: round; }
  .road.edge { stroke: #f4cb62; stroke-width: 4.4; }
  .place-card { position: absolute; left: 10px; top: 10px; width: 302px; height: 117px; padding: 10px 19px 0 12px; display: flex; justify-content: space-between; background: #fff; border-radius: 2px; box-shadow: 0 1px 4px rgba(0, 0, 0, .3); font-size: 12px; line-height: 14px; }
  .place-card h2 { margin: 0; font-size: 14px; line-height: 16px; font-weight: 500; color: #111; }
  .place-card p { margin: 7px 0 6px; color: #666; }
  .rating { display: flex; align-items: center; margin-bottom: 11px; padding-top: 1px; }
  .rating b { font-size: 14px; font-weight: 500; color: #e7711b; margin-right: 3px; }
  .stars { width: 55px; height: 11px; margin-right: 11px; }
  .directions { display: flex; flex-direction: column; align-items: center; gap: 5px; padding-top: 3px; }
  .directions svg { width: 19px; height: 19px; }
  .zoom { position: absolute; left: 733px; top: 465px; width: 40px; height: 81px; background: #fff; border-radius: 2px; display: flex; flex-direction: column; align-items: center; padding-top: 11px; }
  .zoom svg { width: 18px; height: 18px; }
  .zoom i { width: 30px; height: 1px; background: #e6e6e6; margin-top: 11px; }
  .satellite { position: absolute; left: 10px; top: 507px; width: 41px; height: 14px; }

  .scrollbar { width: 17px; background: #f1f1f1; display: flex; flex-direction: column; align-items: center; }
  .scrollbar svg { width: 17px; height: 17px; }
  .thumb { width: 13px; height: 454px; margin-bottom: auto; background: #c1c1c1; }

  .shelf { position: relative; height: 51px; background: #000; display: flex; align-items: flex-start; padding-left: 4px; }
  .item { width: 227px; height: 37px; margin-top: 7px; display: flex; align-items: center; padding: 0 18px 0 16px; border-right: 1px solid #0b1f30; color: #fff; font-size: 12px; letter-spacing: -.3px; }
  .item span { margin-left: 13px; }
  .chev { width: 10px; height: 6px; margin-left: auto; fill: none; stroke: #aaa; stroke-width: 1.6; }
  .showall { width: 78px; height: 32px; margin: 8px 0 0 auto; background: #0f0f10; border: 1px solid #aaa; border-radius: 4px; color: #fff; font: 600 12px "Open Sans", sans-serif; letter-spacing: -.2px; padding: 0; }
  .close { width: 10px; height: 10px; margin: 19px 13px 0; fill: none; stroke: #c0c0c0; stroke-width: 1.5; }
  .taskline { position: absolute; left: 0; right: 0; bottom: 0; height: 2px; background: #071722; }
  .taskline i { display: block; width: 160px; height: 2px; margin-left: 272px; background: #0b4272; }
</style>
